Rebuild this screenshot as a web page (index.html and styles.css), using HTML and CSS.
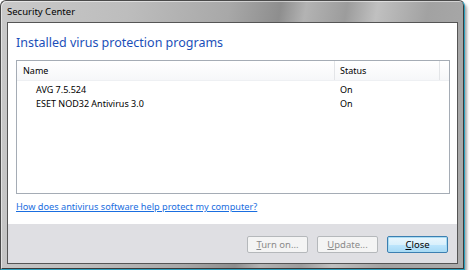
FILE: index.html
```html
<!DOCTYPE html>
<html lang="en">
<head>
  <meta charset="UTF-8" />
  <title>Security Center</title>
  <link rel="stylesheet" href="styles.css">
</head>
<body>
  <div class="window">
    <div class="titlebar">Security Center</div>
    <div class="client">
      <div class="content">
        <h1>Installed virus protection programs</h1>
        <div class="listview">
          <div class="list-header">
            <div class="col col-name">Name</div>
            <div class="col col-status">Status</div>
            <div class="col col-filler"></div>
          </div>
          <div class="list-row">
            <div class="cell cell-name">AVG 7.5.524</div>
            <div class="cell cell-status">On</div>
          </div>
          <div class="list-row">
            <div class="cell cell-name">ESET NOD32 Antivirus 3.0</div>
            <div class="cell cell-status">On</div>
          </div>
        </div>
        <a class="help-link" href="#">How does antivirus software help protect my computer?</a>
      </div>
      <div class="command-area">
        <button class="btn" disabled><u>T</u>urn on...</button>
        <button class="btn" disabled><u>U</u>pdate...</button>
        <button class="btn btn-default"><u>C</u>lose</button>
      </div>
    </div>
  </div>
</body>
</html>
```

FILE: styles.css
```css
body {
  margin: 0;
  padding: 0;
  background-color: #ffffff;
  font-family: 'Noto Sans', 'Open Sans', sans-serif;
  color: #111;
}

.window {
  width: 465px;
  height: 270px;
  box-sizing: border-box;
  display: flex;
  flex-direction: column;
  padding: 0 6px 5px 6px;
  border: 1px solid #4a4a4a;
  border-right-color: #2b9fbd;
  border-bottom-color: #2b9fbd;
  border-radius: 6px 6px 0 0;
  background: linear-gradient(100deg, #c9c9c9 0%, #bdbdbd 25%, #a8a8a8 45%, #8e8e8e 55%, #b3b3b3 60%, #9c9c9c 68%, #c0c0c0 74%, #a2a2a2 84%, #acacac 100%);
  box-shadow: inset 1px 1px 0 rgba(255, 255, 255, 0.5), inset -1px -1px 0 #3a3a3a, 2px 3px 3px rgba(0, 0, 0, 0.35);
}

.titlebar {
  height: 21px;
  line-height: 21px;
  font-size: 9.5px;
  color: #000;
}

.client {
  flex: 1;
  display: flex;
  flex-direction: column;
  background-color: #ffffff;
  border: 1px solid #555;
}

.content {
  flex: 1;
  padding: 10px 7px 0 8px;
}

h1 {
  margin: 0 0 7px 0;
  font-size: 12.5px;
  font-weight: normal;
  line-height: 20px;
  color: #1b4fb9;
}

.listview {
  height: 132px;
  border: 1px solid #a5acb5;
  background-color: #fff;
  font-size: 9px;
}

.list-header {
  display: flex;
  height: 19px;
  line-height: 19px;
  border-bottom: 1px solid #eef0f3;
  background: linear-gradient(#ffffff, #f6f7f9);
}

.col {
  box-sizing: border-box;
  border-right: 1px solid #e3e5e8;
  padding-left: 6px;
  color: #000;
}

.col-name {
  width: 318px;
}

.col-status {
  width: 105px;
  padding-left: 5px;
}

.col-filler {
  flex: 1;
  border-right: none;
}

.list-row {
  display: flex;
  height: 14px;
  line-height: 14px;
  color: #000;
}

.list-header + .list-row {
  margin-top: 2px;
}

.cell-name {
  width: 318px;
  padding-left: 19px;
  box-sizing: border-box;
}

.cell-status {
  padding-left: 5px;
}

.help-link {
  display: block;
  margin-top: 6px;
  font-size: 9.2px;
  line-height: 14px;
  color: #1a6ee0;
}

.command-area {
  height: 39px;
  display: flex;
  justify-content: flex-end;
  align-items: flex-start;
  gap: 9px;
  padding: 12px 9px 0 0;
  box-sizing: border-box;
  background-color: #dfdfe3;
}

.btn {
  width: 61px;
  height: 17px;
  padding: 0;
  font-family: 'Noto Sans', 'Open Sans', sans-serif;
  font-size: 9.5px;
  line-height: 15px;
  border: 1px solid #707070;
  border-radius: 2px;
  background: linear-gradient(#f2f2f2 0%, #ebebeb 50%, #dddddd 51%, #cfcfcf 100%);
  color: #000;
}

.btn:disabled {
  border-color: #b5b8bb;
  background: #f4f4f4;
  color: #8a8a8a;
}

.btn-default {
  border-color: #3c7fb1;
  background: linear-gradient(#eaf6fd 0%, #d9f0fc 50%, #bee6fd 51%, #a7d9f5 100%);
  box-shadow: 0 0 0 1px #a9dcf3 inset;
}
```
